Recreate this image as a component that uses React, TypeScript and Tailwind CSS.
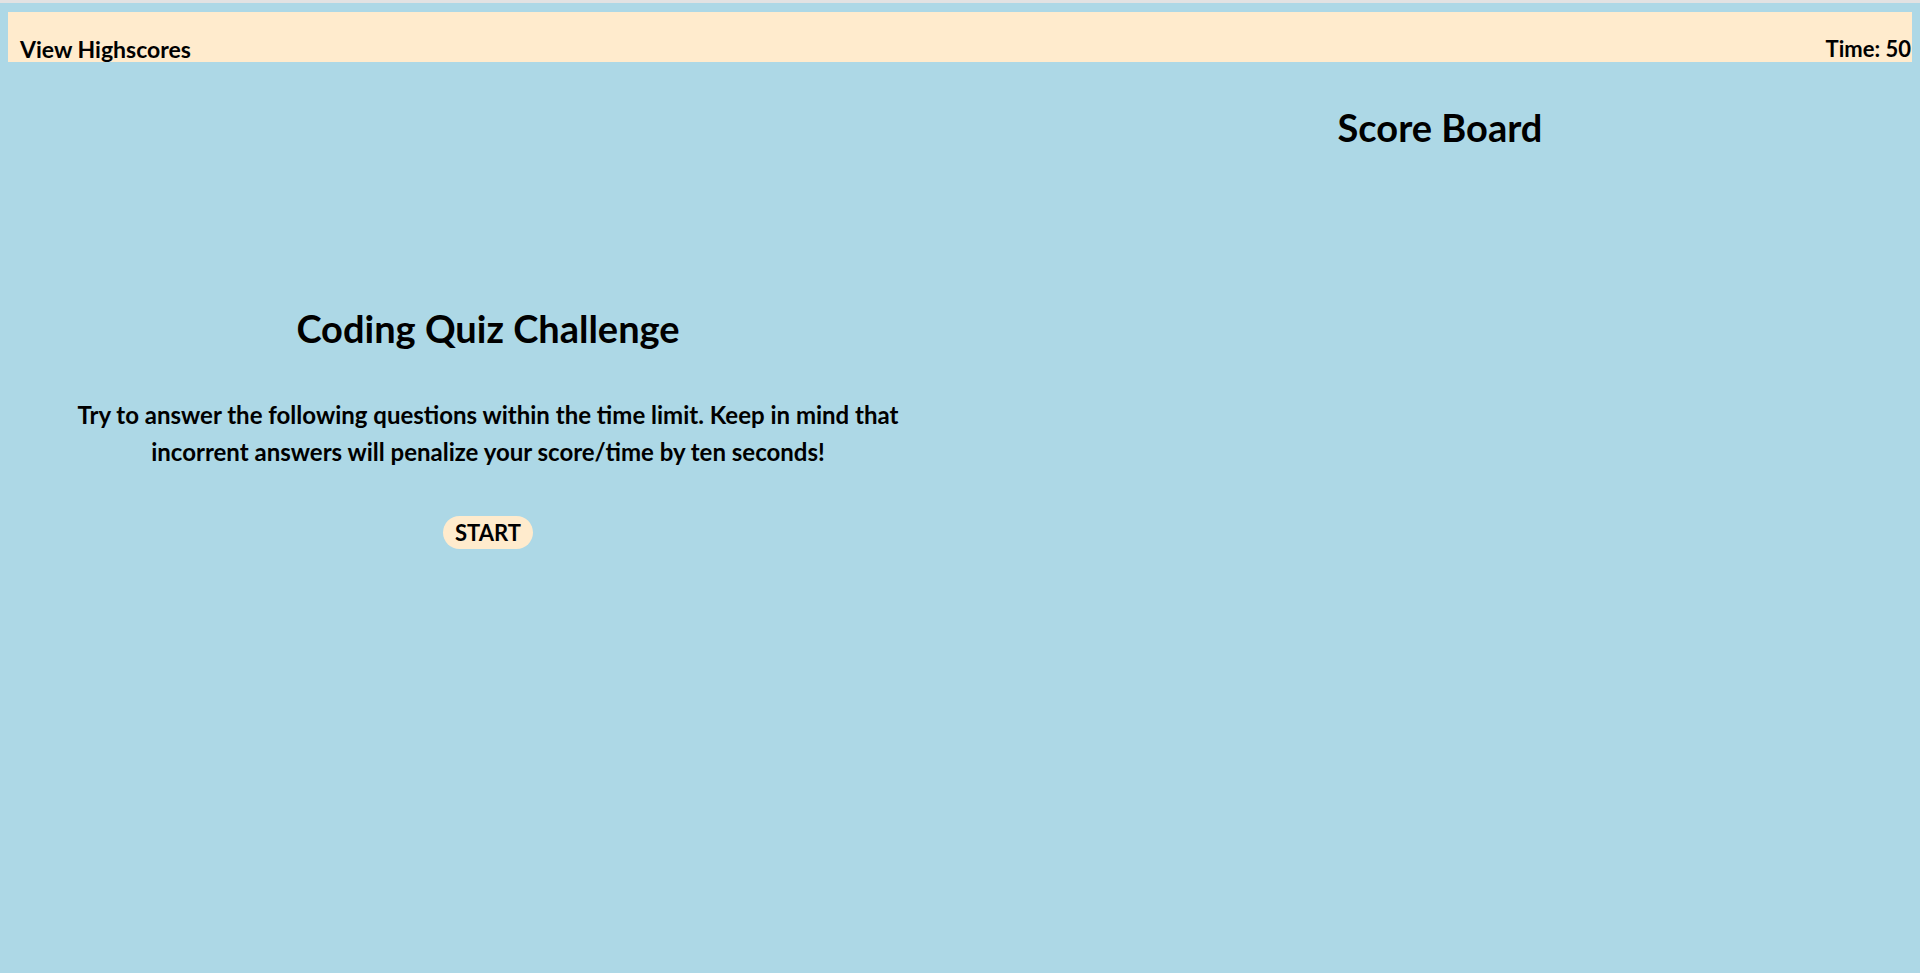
export default function App() {
  return (
    <div className="min-h-screen bg-[#add8e6] text-black font-['Lato',sans-serif]">
      <div className="h-[3px] bg-[#e2e2e2]" />
      <header className="mx-2 mt-[9px] h-[50px] bg-[#ffebcd] flex items-end justify-between pl-3 pr-px">
        <span className="text-[23px] font-bold leading-[26px]">View Highscores</span>
        <span className="text-[22px] font-bold leading-[26px]">Time: 50</span>
      </header>
      <main className="mx-2 flex">
        <section className="w-[960px] flex flex-col items-center pt-[243px]">
          <h1 className="text-[38px] font-bold leading-[46px]">Coding Quiz Challenge</h1>
          <p className="mt-[45px] text-[24px] font-bold leading-[37px] text-center w-[860px]">
            Try to answer the following questions within the time limit. Keep in mind that incorrent answers will penalize your score/time by ten seconds!
          </p>
          <button className="mt-[46px] h-[33px] px-[12px] rounded-full bg-[#ffebcd] text-[22px] font-bold leading-[33px]">
            START
          </button>
        </section>
        <section className="flex-1 flex flex-col items-center pt-[42px]">
          <h2 className="text-[38px] font-bold leading-[46px]">Score Board</h2>
        </section>
      </main>
    </div>
  );
}
